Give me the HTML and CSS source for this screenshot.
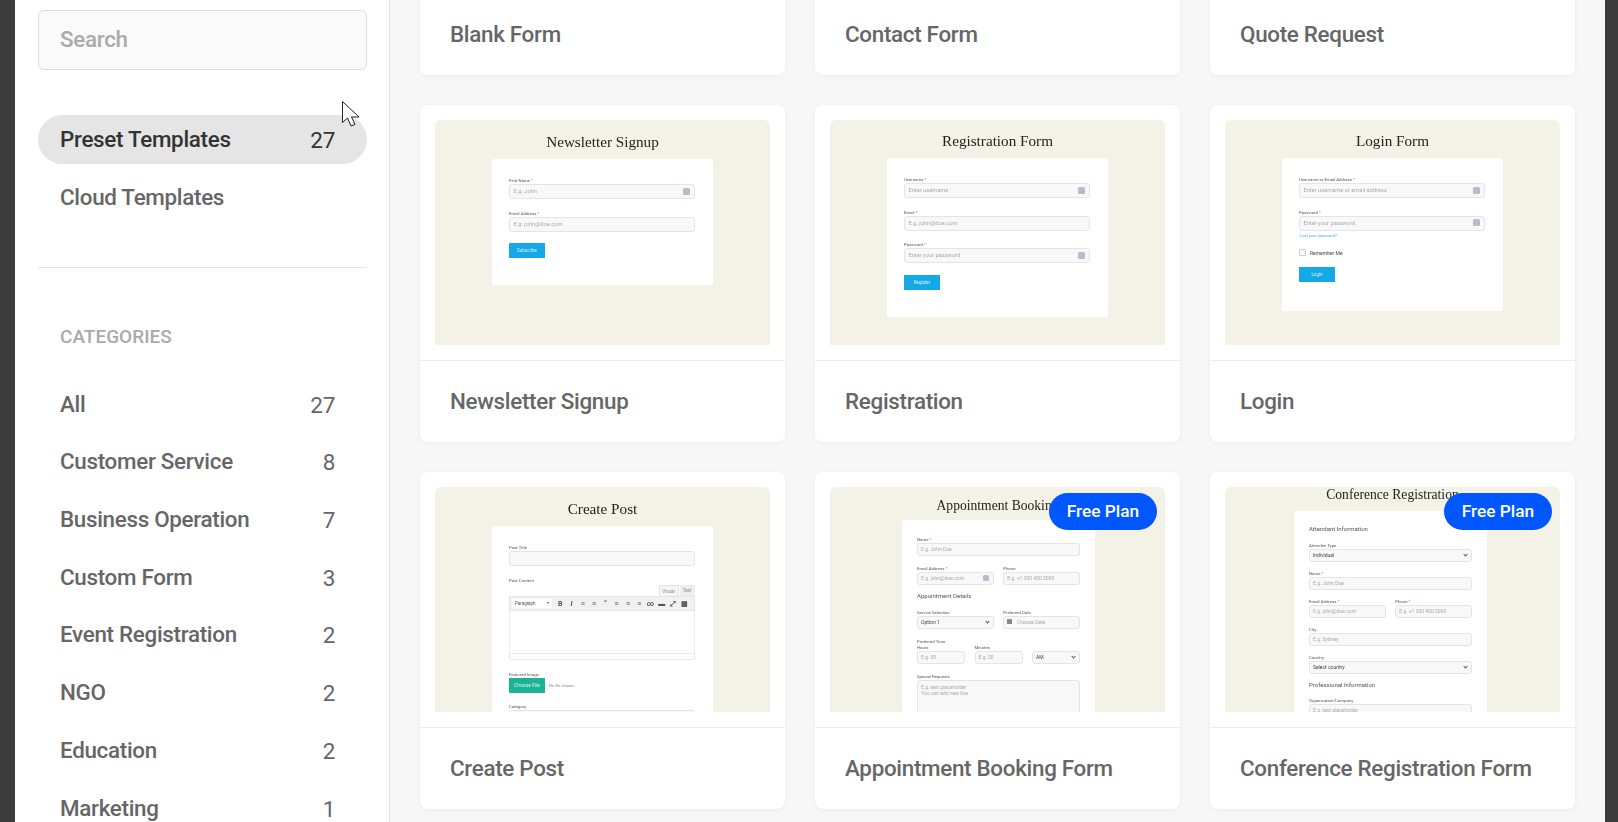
FILE: index.html
```html
<!DOCTYPE html>
<html lang="en">
<head>
  <meta charset="UTF-8">
  <meta name="viewport" content="width=device-width, initial-scale=1.0">
  <title>Form Templates</title>
  <link rel="stylesheet" href="styles.css">
</head>
<body>

<div class="app">
  <aside class="sidebar">
    <input class="search" type="text" placeholder="Search">

    <nav class="nav">
      <a class="nav-item active"><span>Preset Templates</span><span class="count">27</span></a>
      <a class="nav-item"><span>Cloud Templates</span></a>
    </nav>

    <hr class="divider">

    <h4 class="nav-title">Categories</h4>
    <nav class="nav">
      <a class="nav-item"><span>All</span><span class="count">27</span></a>
      <a class="nav-item"><span>Customer Service</span><span class="count">8</span></a>
      <a class="nav-item"><span>Business Operation</span><span class="count">7</span></a>
      <a class="nav-item"><span>Custom Form</span><span class="count">3</span></a>
      <a class="nav-item"><span>Event Registration</span><span class="count">2</span></a>
      <a class="nav-item"><span>NGO</span><span class="count">2</span></a>
      <a class="nav-item"><span>Education</span><span class="count">2</span></a>
      <a class="nav-item"><span>Marketing</span><span class="count">1</span></a>
    </nav>
  </aside>

  <main class="main">
    <div class="grid">
      <!-- first row is scrolled, only the names are still visible -->
      <div class="card"><div class="thumb-spacer"></div><div class="card-name">Blank Form</div></div>
      <div class="card"><div class="thumb-spacer"></div><div class="card-name">Contact Form</div></div>
      <div class="card"><div class="thumb-spacer"></div><div class="card-name">Quote Request</div></div>

      <div class="card">
        <div class="thumb-wrap">
          <div class="mock">
            <div class="mock-title">Newsletter Signup</div>
            <div class="panel">
              <div class="m-field"><div class="m-label">First Name <b>*</b></div><div class="m-input">E.g. John<i class="m-key"></i></div></div>
              <div class="m-field"><div class="m-label">Email Address <b>*</b></div><div class="m-input">E.g. john@doe.com</div></div>
              <div class="m-btn">Subscribe</div>
            </div>
          </div>
        </div>
        <div class="card-name">Newsletter Signup</div>
      </div>

      <div class="card">
        <div class="thumb-wrap">
          <div class="mock mock-up">
            <div class="mock-title">Registration Form</div>
            <div class="panel">
              <div class="m-field"><div class="m-label">Username <b>*</b></div><div class="m-input">Enter username<i class="m-key"></i></div></div>
              <div class="m-field"><div class="m-label">Email <b>*</b></div><div class="m-input">E.g. john@doe.com</div></div>
              <div class="m-field"><div class="m-label">Password <b>*</b></div><div class="m-input">Enter your password<i class="m-key"></i></div></div>
              <div class="m-btn">Register</div>
            </div>
          </div>
        </div>
        <div class="card-name">Registration</div>
      </div>

      <div class="card">
        <div class="thumb-wrap">
          <div class="mock mock-up mock-login">
            <div class="mock-title">Login Form</div>
            <div class="panel">
              <div class="m-field"><div class="m-label">Username or Email Address <b>*</b></div><div class="m-input">Enter username or email address<i class="m-key"></i></div></div>
              <div class="m-field tight"><div class="m-label">Password <b>*</b></div><div class="m-input">Enter your password<i class="m-key"></i></div></div>
              <div class="m-link">Lost your password?</div>
              <div class="m-check"><i></i>Remember Me</div>
              <div class="m-btn">Login</div>
            </div>
          </div>
        </div>
        <div class="card-name">Login</div>
      </div>

      <div class="card">
        <div class="thumb-wrap">
          <div class="mock">
            <div class="mock-title">Create Post</div>
            <div class="panel">
              <div class="m-field"><div class="m-label">Post Title</div><div class="m-input"></div></div>
              <div class="m-label">Post Content</div>
              <div class="m-tabs"><span class="on">Visual</span><span>Text</span></div>
              <div class="m-toolbar">
                <span class="m-para">Paragraph <em>▾</em></span>
                <span class="tool">B</span><span class="tool it">I</span><span class="tool">≡</span><span class="tool">≡</span><span class="tool">“</span><span class="tool">≡</span><span class="tool">≡</span><span class="tool">≡</span><span class="tool">∞</span><span class="tool">▬</span><span class="tool">⤢</span><span class="tool">▦</span>
              </div>
              <div class="m-editor"></div>
              <div class="m-status"></div>
              <div class="m-field"><div class="m-label">Featured Image</div><div class="m-file"><span class="m-btn teal">Choose File</span>No file chosen</div></div>
              <div class="m-field"><div class="m-label">Category</div><div class="m-input"></div></div>
            </div>
          </div>
        </div>
        <div class="card-name">Create Post</div>
      </div>

      <div class="card">
        <div class="thumb-wrap">
          <div class="mock mock-narrow mock-appt">
            <div class="mock-title">Appointment Booking</div>
            <div class="panel">
              <div class="m-field"><div class="m-label">Name <b>*</b></div><div class="m-input">E.g. John Doe</div></div>
              <div class="m-row">
                <div class="m-field"><div class="m-label">Email Address <b>*</b></div><div class="m-input">E.g. john@doe.com<i class="m-key"></i></div></div>
                <div class="m-field"><div class="m-label">Phone</div><div class="m-input">E.g. +1 300 400 5000</div></div>
              </div>
              <div class="m-head">Appointment Details</div>
              <div class="m-row">
                <div class="m-field"><div class="m-label">Service Selection</div><div class="m-input dark">Option 1<i class="m-caret"></i></div></div>
                <div class="m-field"><div class="m-label">Preferred Date</div><div class="m-input"><i class="m-cal"></i>Choose Date</div></div>
              </div>
              <div class="m-label">Preferred Time</div>
              <div class="m-row three">
                <div class="m-field"><div class="m-label">Hours</div><div class="m-input">E.g. 08</div></div>
                <div class="m-field"><div class="m-label">Minutes</div><div class="m-input">E.g. 00</div></div>
                <div class="m-field"><div class="m-label">&nbsp;</div><div class="m-input dark">AM<i class="m-caret"></i></div></div>
              </div>
              <div class="m-field"><div class="m-label">Special Requests</div><div class="m-input m-area">E.g. text placeholder<br>You can add new line</div></div>
            </div>
          </div>
          <span class="badge">Free Plan</span>
        </div>
        <div class="card-name">Appointment Booking Form</div>
      </div>

      <div class="card">
        <div class="thumb-wrap">
          <div class="mock mock-narrow mock-conf">
            <div class="mock-title">Conference Registration</div>
            <div class="panel">
              <div class="m-head">Attendant Information</div>
              <div class="m-field"><div class="m-label">Attendee Type</div><div class="m-input dark">Individual<i class="m-caret"></i></div></div>
              <div class="m-field"><div class="m-label">Name <b>*</b></div><div class="m-input">E.g. John Doe</div></div>
              <div class="m-row">
                <div class="m-field"><div class="m-label">Email Address <b>*</b></div><div class="m-input">E.g. john@doe.com</div></div>
                <div class="m-field"><div class="m-label">Phone <b>*</b></div><div class="m-input">E.g. +1 300 400 5000</div></div>
              </div>
              <div class="m-field"><div class="m-label">City</div><div class="m-input">E.g. Sydney</div></div>
              <div class="m-field"><div class="m-label">Country</div><div class="m-input dark">Select country<i class="m-caret"></i></div></div>
              <div class="m-head">Professional Information</div>
              <div class="m-field"><div class="m-label">Organization/Company</div><div class="m-input">E.g. text placeholder</div></div>
            </div>
          </div>
          <span class="badge">Free Plan</span>
        </div>
        <div class="card-name">Conference Registration Form</div>
      </div>
    </div>
  </main>

  <svg class="cursor" width="20" height="30" viewBox="0 0 20 30"><path d="M1.5 1.5V22.5L6.5 18L10 26L14 24.5L10.5 17H18Z" fill="#fff" stroke="#222" stroke-width="1"/></svg>
</div>

</body>
</html>
```

FILE: styles.css
```css
* { box-sizing: border-box; }
html, body { margin: 0; height: 100%; overflow: hidden; }
body { font-family: Roboto, "Liberation Sans", sans-serif; background-color: #3b3b3b; color: #666; }

.app { display: flex; height: 100vh; margin: 0 13px 0 15px; background-color: #f7f7f7; overflow: hidden; position: relative; }

/* sidebar */
.sidebar { flex: 0 0 375px; background-color: #fff; border-right: 1px solid #e3e3e3; padding: 10px 22px 0 23px; overflow: hidden; }
.search { display: block; width: 100%; height: 60px; padding: 0 21px 2px; background-color: #fafafa; border: 1px solid #ddd; border-radius: 6px; font-family: inherit; font-size: 22.4px; font-weight: 500; letter-spacing: -0.3px; margin-bottom: 45px; }
.search::placeholder { color: #aaa; opacity: 1; }
.nav { display: flex; flex-direction: column; gap: 8.7px; }
.nav-item { display: flex; justify-content: space-between; align-items: center; height: 49px; flex: none; padding: 0 32px 1px 22px; border-radius: 25px; font-size: 22.4px; font-weight: 500; letter-spacing: -0.3px; color: #666; }
.nav-item.active { background-color: #e5e5e5; color: #333; }
.count { padding-top: 2px; font-size: 22.5px; font-weight: 400; }
.divider { border: none; border-top: 1px solid #e3e3e3; margin: 45px 0 57px; }
.nav-title { margin: 0 0 31px 22px; height: 24px; line-height: 24px; font-size: 19px; font-weight: 500; color: #aaa; text-transform: uppercase; }

/* template cards */
.main { flex: 1; padding: 0 30px; min-width: 0; }
.grid { display: grid; grid-template-columns: repeat(3, 1fr); gap: 30px; margin-top: -262px; }
.card { background-color: #fff; border-radius: 8px; box-shadow: 0 1px 6px rgba(0, 0, 0, 0.05); overflow: hidden; }
.thumb-spacer { height: 256px; border-bottom: 1px solid #ececec; }
.thumb-wrap { position: relative; height: 256px; padding: 15px 15px 0; border-bottom: 1px solid #ececec; }
.card-name { display: flex; align-items: center; height: 81px; padding: 0 30px 2px; font-size: 22.4px; font-weight: 500; letter-spacing: -0.3px; color: #666; white-space: nowrap; }
.badge { position: absolute; top: 21px; right: 23px; width: 108px; height: 37px; line-height: 37px; text-align: center; border-radius: 19px; background-color: #0057ff; color: #fff; font-size: 17.3px; font-weight: 500; }

/* little form pictured in a thumbnail */
.mock { height: 225px; background-color: #f4f1e6; border-radius: 6px 6px 0 0; overflow: hidden; padding-top: 14px; filter: blur(0.35px); color: #666; }
.mock-up { padding-top: 13px; }
.mock-title { height: 16px; line-height: 16px; margin-bottom: 9px; text-align: center; white-space: nowrap; font-family: "Liberation Serif", serif; font-size: 15.2px; color: #222; }
.panel { width: 221px; margin: 0 0 0 56.5px; padding: 19px 18px 27px 17.5px; background-color: #fff; border-radius: 3px; }
.mock-login .panel { padding-bottom: 29px; }
.m-field { margin-bottom: 11.5px; }
.m-field.tight { margin-bottom: 2px; }
.m-label { height: 5px; line-height: 5px; margin-bottom: 1px; font-size: 4.3px; color: #555; white-space: nowrap; }
.m-label b { color: #e8305a; font-weight: 400; }
.m-input { position: relative; height: 15px; line-height: 13px; padding: 0 3.5px; background-color: #f8f8f8; border: 1px solid #e4e4e4; border-radius: 3px; font-size: 5.7px; color: #aaa; white-space: nowrap; }
.m-input.dark { color: #444; }
.m-area { height: 44px; line-height: 6.5px; padding-top: 3px; }
.m-key { position: absolute; right: 3.5px; top: 2.5px; width: 7px; height: 7px; background-color: #b5bccb; border-radius: 1.5px; }
.m-caret { position: absolute; right: 4px; top: 3px; width: 3px; height: 3px; border-right: 0.7px solid #555; border-bottom: 0.7px solid #555; transform: rotate(45deg); }
.m-cal { display: inline-block; width: 4.5px; height: 4.5px; margin-right: 5px; background-color: #888; border-radius: 0.5px; }
.m-btn { width: 36px; height: 15px; line-height: 15px; text-align: center; background-color: #13a9e6; color: #d8f1fb; font-size: 4.5px; }
.m-btn.teal { display: inline-block; flex: none; background-color: #1ab394; font-size: 5px; }
.m-link { height: 5px; line-height: 5px; margin-left: 1px; font-size: 4px; color: #3db8ea; }
.m-check { display: flex; align-items: center; gap: 4px; height: 7px; margin: 11.5px 0 10.5px; font-size: 5px; color: #444; }
.m-check i { width: 7px; height: 7px; border: 0.7px solid #ccc; border-radius: 1px; background-color: #fafafa; }
.m-file { display: flex; align-items: center; gap: 4px; font-size: 4px; color: #888; }

/* editor */
.m-tabs { display: flex; justify-content: flex-end; gap: 1px; margin-top: 2.5px; height: 11px; font-size: 4.5px; line-height: 11px; text-align: center; }
.m-tabs span { width: 15px; background-color: #ededed; color: #888; }
.m-tabs .on { width: 20px; background-color: #f5f5f5; border: 0.5px solid #e4e4e4; border-bottom: none; }
.m-toolbar { display: flex; align-items: center; height: 15px; padding: 0 2px; background-color: #f1f1f1; border: 0.5px solid #e4e4e4; font-size: 7px; color: #555; }
.m-para { display: flex; justify-content: space-between; width: 40px; margin-right: 2.5px; padding: 0 3px; height: 9px; line-height: 9px; background-color: #fff; font-size: 4.5px; }
.m-para em { font-style: normal; font-size: 3.5px; }
.tool { width: 11.3px; text-align: center; font-weight: 700; }
.tool.it { font-style: italic; }
.m-editor { height: 42px; background-color: #fff; border-left: 0.5px solid #eee; border-right: 0.5px solid #eee; }
.m-status { height: 7px; margin-bottom: 11.5px; background-color: #fff; border: 0.5px solid #e8e8e8; border-radius: 0 0 2px 2px; }

/* narrower forms */
.mock-narrow .panel { width: 193px; margin-left: 71.5px; padding: 16.5px 14.5px 20px 15.5px; }
.mock-narrow .m-field { margin-bottom: 10px; }
.mock-narrow .m-input { height: 13px; line-height: 11px; font-size: 5px; padding: 0 3px; }
.mock-narrow .m-area { height: 44px; line-height: 6.5px; padding-top: 3px; }
.mock-narrow .m-key { top: 2px; width: 6.5px; height: 6.5px; }
.m-row { display: grid; grid-template-columns: 1fr 1fr; gap: 9.5px; }
.m-row.three { grid-template-columns: 1fr 1fr 1fr; }
.m-head { height: 8px; line-height: 8px; margin: -2.5px 0 9.5px; font-size: 6px; color: #555; white-space: nowrap; }
.mock-appt { padding-top: 11px; }
.mock-appt .mock-title { height: 15px; line-height: 15px; margin-bottom: 7px; font-size: 13.6px; }
.mock-conf { padding-top: 0; }
.mock-conf .mock-title { margin-bottom: 8px; font-size: 13.6px; }
.mock-conf .panel { margin-left: 69px; padding: 14px 15px 20px; }
.mock-conf .m-head:first-child { margin-top: 0; }
.mock-conf .m-field { margin-bottom: 9.2px; }

.cursor { position: absolute; left: 326px; top: 100px; }
```
